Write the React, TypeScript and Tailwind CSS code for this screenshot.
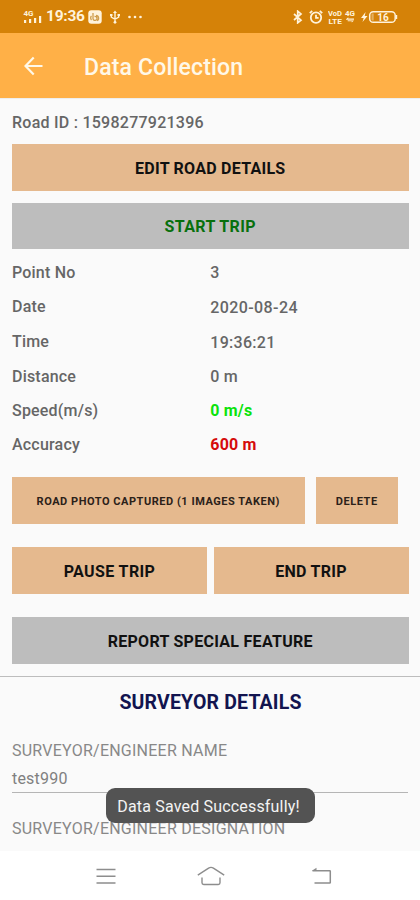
import type { ReactNode } from 'react';
import clsx from 'clsx';

const readings = [
  { label: 'Point No', value: '3', row: 'h-[34px]' },
  { label: 'Date', value: '2020-08-24', row: 'h-[35px]', labelClass: 'pb-[1px]', valueClass: 'pt-[1px] tracking-[0.4px]' },
  { label: 'Time', value: '19:36:21', row: 'h-[35px]', labelClass: 'pb-[1px]', valueClass: 'pt-[1px] tracking-[0.3px]' },
  { label: 'Distance', value: '0 m', row: 'h-[34px]' },
  { label: 'Speed(m/s)', value: '0 m/s', row: 'h-[34px]', valueClass: 'font-bold text-[#0be30b]' },
  { label: 'Accuracy', value: '600 m', row: 'h-[34px]', valueClass: 'font-bold text-[#d50b0b]' },
];

function StatusBar() {
  return (
    <div className="flex h-[33px] items-center bg-[#d58208] pt-[1px] pr-[22px] pl-[23px] text-[#fff3dc]">
      <svg className="h-[16px] w-[19px]" viewBox="0 0 19 16" fill="currentColor">
        <text x="0.5" y="6.5" fontSize="8" fontWeight="700" textLength="10" lengthAdjust="spacingAndGlyphs">4G</text>
        <path d="M1 11h2.2v3H1zM6 10h2.2v4H6zM11 9h2.2v5H11zM16 7h2.2v7H16z" />
      </svg>
      <span className="ml-[4px] w-[38px] text-[15.5px] leading-none font-bold tracking-[-0.25px]">19:36</span>
      <svg className="ml-[4px] h-[14px] w-[14px]" viewBox="0 0 14 14">
        <rect x="0.3" y="0.3" width="13.4" height="13.4" rx="3" fill="#fff3dc" />
        <path d="M5 3v5.5a2 2 0 1 0 1.5-2M8 5.5c3 0 3.5 4.5 1 5M3.5 6c-1.2 1-1 3 0 4" fill="none" stroke="#cf9d4d" strokeWidth="1.3" />
      </svg>
      <svg className="ml-[7px] h-[14px] w-[12px]" viewBox="0 0 12 14" fill="none" stroke="currentColor" strokeWidth="1.4">
        <path d="M6 2v10M2.3 5v2.2L6 9.3l3.7-2.1V5" />
        <path d="M4 3l2-2.6L8 3zM1 4h2.5v2H1zM8.5 4H11v2H8.5z" fill="currentColor" stroke="none" />
        <circle cx="6" cy="12.3" r="1.4" fill="currentColor" stroke="none" />
      </svg>
      <svg className="ml-[6px] h-[4px] w-[16px]" viewBox="0 0 16 4" fill="currentColor">
        <circle cx="2.5" cy="2" r="1.3" />
        <circle cx="8" cy="2" r="1.3" />
        <circle cx="13.5" cy="2" r="1.3" />
      </svg>

      <svg className="ml-auto h-[14px] w-[10px]" viewBox="0 0 10 14" fill="none" stroke="currentColor" strokeWidth="1.7">
        <path d="M1 4l7 6.2-3.3 2.6V1.2L8 3.9 1 10" />
      </svg>
      <svg className="ml-[6px] h-[14px] w-[14px]" viewBox="0 0 14 14" fill="none" stroke="currentColor" strokeWidth="1.8">
        <circle cx="7" cy="7.6" r="5.2" />
        <path d="M7 4.7v3.1h2.6M.8 3.2L3.2.9M13.2 3.2L10.8.9" />
      </svg>
      <svg className="ml-[5px] h-[16px] w-[28px]" viewBox="0 0 28 16" fill="currentColor" fontWeight="700">
        <text x="0" y="6.5" fontSize="6.8" textLength="14" lengthAdjust="spacingAndGlyphs">VoD</text>
        <text x="0.5" y="15.3" fontSize="6.8" textLength="13.5" lengthAdjust="spacingAndGlyphs">LTE</text>
        <text x="17" y="7" fontSize="7" textLength="10" lengthAdjust="spacingAndGlyphs">4G</text>
        <path d="M18 10.2l2.3-2v1.3H26v1.2h-8zM26 11.5l-2.3 2v-1.2h-4v-1z" />
      </svg>
      <svg className="ml-[5px] h-[14px] w-[37px]" viewBox="0 0 37 14">
        <path d="M4.6 2L0 8h2.7L1.5 12 6.5 6H3.7z" fill="currentColor" />
        <rect x="8.7" y="1.7" width="25.5" height="10.6" rx="3.6" fill="none" stroke="currentColor" strokeWidth="1.5" />
        <path d="M35 5h1.2v4H35z" fill="currentColor" />
        <path d="M10.5 3.5h2.2v7h-2.2z" fill="#e4ae5d" />
        <text x="22" y="10.6" textAnchor="middle" fontSize="10" fontWeight="700" fill="currentColor">16</text>
      </svg>
    </div>
  );
}

function ActionButton({ className, children }: { className?: string; children: ReactNode }) {
  return (
    <button
      className={clsx('flex items-center justify-center font-bold whitespace-nowrap', className)}
    >
      {children}
    </button>
  );
}

function NavBar() {
  return (
    <nav className="flex h-[49px] items-center bg-white pl-[96px] text-[#8d8d8d]">
      <svg className="h-[18px] w-[20px]" viewBox="0 0 20 18" fill="none" stroke="currentColor" strokeWidth="1.5">
        <path d="M.5 2.5h19M.5 9.3h19M.5 16h19" />
      </svg>
      <svg className="ml-[81px] h-[20px] w-[28px]" viewBox="0 0 28 20" fill="none" stroke="currentColor" strokeWidth="1.4">
        <path d="M.8 9.2L11.6 2.1Q14 .7 16.4 2.1L27.2 9.2" />
        <path d="M5 11.5v5.3q0 1.7 1.7 1.7h14.6q1.7 0 1.7-1.7v-5.3" />
      </svg>
      <svg className="ml-[86px] h-[18px] w-[21px]" viewBox="0 0 21 18" fill="none" stroke="currentColor" strokeWidth="1.5">
        <path d="M1.5 3.7h17.2q.6 0 .6.6v11.1q0 .6-.6.6H3.5" />
        <path d="M5.5.7L.8 3.7H5.5z" fill="currentColor" stroke="none" />
      </svg>
    </nav>
  );
}

export default function App() {
  return (
    <div className="relative flex h-[900px] w-[420px] flex-col overflow-hidden bg-[#fafafa] font-['Roboto',sans-serif] text-base text-[#666]">
      <StatusBar />
      <header className="flex h-[65px] shrink-0 items-center bg-[#ffb047] pl-[24px] text-[#fff8e8]">
        <svg className="h-[20px] w-[19px]" viewBox="0 0 19 20" fill="none" stroke="currentColor" strokeWidth="2.2">
          <path d="M18.5 10H2M9.7 1.5L1.5 10l8.2 8.5" />
        </svg>
        <h1 className="ml-[41px] pt-[5px] text-[23px] font-medium tracking-[0.17px]">Data Collection</h1>
      </header>

      <main className="flex h-[753px] shrink-0 flex-col overflow-hidden border-t border-[#eee]">
        <div className="flex flex-col px-[12px] pr-[11.5px]">
          <div className="flex h-[44.5px] items-center pt-[4px] font-medium tracking-[0.25px]">
            Road ID : 1598277921396
          </div>
          <ActionButton className="h-[47px] bg-[#e5b98e] pt-[3px] tracking-[0.25px] text-[#111]">EDIT ROAD DETAILS</ActionButton>
          <ActionButton className="mt-[12px] h-[46px] bg-[#bdbdbd] pt-[2px] tracking-[0.38px] text-[#08700d]">START TRIP</ActionButton>

          <dl className="mt-[7.5px] font-medium tracking-[0.2px]">
            {readings.map((r) => (
              <div key={r.label} className={clsx('grid grid-cols-2 items-center', r.row)}>
                <dt className={r.labelClass}>{r.label}</dt>
                <dd className={r.valueClass}>{r.value}</dd>
              </div>
            ))}
          </dl>

          <div className="mt-[15px] flex gap-[11px]">
            <ActionButton className="h-[47px] w-[292.5px] bg-[#e5b98e] pt-[3px] text-[11px] tracking-[0.53px] text-[#2b2119]">
              ROAD PHOTO CAPTURED (1 IMAGES TAKEN)
            </ActionButton>
            <ActionButton className="h-[47px] w-[82.5px] bg-[#e5b98e] pt-[3px] text-[11px] tracking-[0.53px] text-[#2b2119]">
              DELETE
            </ActionButton>
          </div>
          <div className="mt-[23px] grid grid-cols-2 gap-[6.5px] text-[#111]">
            <ActionButton className="h-[46.5px] bg-[#e5b98e] pt-[4px] tracking-[0.38px]">PAUSE TRIP</ActionButton>
            <ActionButton className="h-[46.5px] bg-[#e5b98e] pt-[4px] tracking-[0.25px]">END TRIP</ActionButton>
          </div>
          <ActionButton className="mt-[23.5px] h-[46.5px] bg-[#bdbdbd] pt-[4px] tracking-[0.28px] text-[#111]">
            REPORT SPECIAL FEATURE
          </ActionButton>
        </div>

        <section className="mt-[12px] border-t border-[#bdbdbd] px-[12px]">
          <h2 className="flex h-[53px] items-center justify-center pl-[1px] text-[19.5px] font-bold tracking-[0.15px] text-[#12144f]">
            SURVEYOR DETAILS
          </h2>
          <div className="flex h-[40px] items-center pt-[2px] tracking-[0.24px] text-[#888]">SURVEYOR/ENGINEER NAME</div>
          <div className="flex h-[23px] items-center border-b border-[#b5b5b5] pb-[3px] tracking-[0.2px] text-[#808080]">
            test990
          </div>
          <div className="flex h-[70px] items-center pt-[2px] tracking-[0.24px] text-[#888]">SURVEYOR/ENGINEER DESIGNATION</div>
        </section>
      </main>
      <NavBar />

      <div
        role="status"
        className="absolute top-[788px] left-[106px] flex h-[35px] w-[209px] items-center justify-center rounded-[9px] bg-[#535353] pt-[2px] pr-[4px] text-base tracking-[0.18px] whitespace-nowrap text-[#f4f4f4]"
      >
        Data Saved Successfully!
      </div>
    </div>
  );
}
